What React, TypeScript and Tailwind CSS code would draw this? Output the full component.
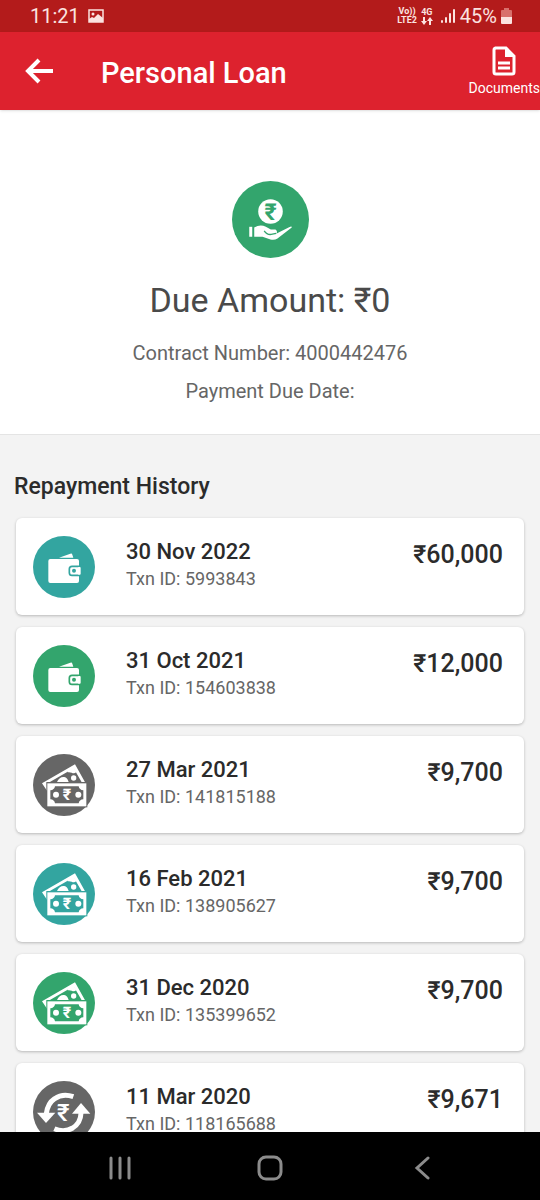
import type { ReactNode } from "react";
import clsx from "clsx";

type IconKind = "wallet" | "notes" | "refund";
type Tone = "teal" | "green" | "gray";

type Repayment = {
  date: string;
  txnId: string;
  amount: string;
  icon: IconKind;
  tone: Tone;
};

const repayments: Repayment[] = [
  { date: "30 Nov 2022", txnId: "5993843", amount: "₹60,000", icon: "wallet", tone: "teal" },
  { date: "31 Oct 2021", txnId: "154603838", amount: "₹12,000", icon: "wallet", tone: "green" },
  { date: "27 Mar 2021", txnId: "141815188", amount: "₹9,700", icon: "notes", tone: "gray" },
  { date: "16 Feb 2021", txnId: "138905627", amount: "₹9,700", icon: "notes", tone: "teal" },
  { date: "31 Dec 2020", txnId: "135399652", amount: "₹9,700", icon: "notes", tone: "green" },
  { date: "11 Mar 2020", txnId: "118165688", amount: "₹9,671", icon: "refund", tone: "gray" },
];

// currentColor is the disc, everything on top of it is white
const Disc = ({ tone, children }: { tone: Tone; children: ReactNode }) => (
  <svg
    viewBox="0 0 186 186"
    aria-hidden="true"
    className={clsx(
      "size-[62px] shrink-0",
      tone === "teal" && "text-[#33a5a0]",
      tone === "green" && "text-[#33a56d]",
      tone === "gray" && "text-[#666666]"
    )}
  >
    <circle cx="93" cy="93" r="93" fill="currentColor" />
    {children}
  </svg>
);

const WalletArt = () => (
  <>
    <path d="M78 65 L112 53 Q117 51 118 56 L121 65 Z" fill="#fff" />
    <rect x="46" y="69" width="92" height="72" rx="6" fill="#fff" />
    <path d="M146 91 H117 Q109 91 109 99 V110 Q109 118 117 118 H146 Z" fill="#fff" stroke="currentColor" strokeWidth="5" />
    <path d="M139 86 H152 V123 H139 Z" fill="currentColor" />
    <path d="M136 93 H140 Q143 93 143 96 V113 Q143 116 140 116 H136 Z" fill="#fff" />
    <circle cx="123" cy="104" r="6" fill="currentColor" />
  </>
);

const NotesArt = () => (
  <>
    <path d="M27 88 L126 31 L157 86 H147 L122 43 L39 91 L43 98 V112 Z" fill="#fff" />
    <path d="M72 84 Q80 67 94 69 Q103 71 107 84 Z" fill="#fff" />
    <path d="M104 49 L122 40 L130 54 Q124 60 116 56 Q110 54 104 55 Z" fill="#fff" />
    <circle cx="122" cy="72" r="8" fill="#fff" />
    <path d="M37 92 L53 83 Q60 90 53 98 H43 Z" fill="#fff" />
    <rect x="40" y="84" width="123" height="76" fill="currentColor" />
    <rect x="43" y="88" width="117" height="69" fill="#fff" />
    <path
      d="M66 97 H137 Q139 108 151 109 V136 Q139 137 137 148 H66 Q64 137 52 136 V109 Q64 108 66 97 Z"
      fill="currentColor"
    />
    <circle cx="69" cy="122" r="9" fill="#fff" />
    <circle cx="136" cy="122" r="9" fill="#fff" />
    <text x="102" y="139" textAnchor="middle" fontSize="48" fontWeight="700" fill="#fff">
      ₹
    </text>
  </>
);

const RefundArt = () => (
  <>
    <path d="M121 47 Q89 36 65 53 Q44 67 40 98" fill="none" stroke="#fff" strokeWidth="15" />
    <path d="M12 95 H67 L39 126 Z" fill="#fff" />
    <path d="M64 143 Q93 156 119 141 Q143 126 144 96" fill="none" stroke="#fff" strokeWidth="15" />
    <path d="M117 98 H172 L144 66 Z" fill="#fff" />
    <text x="91" y="121" textAnchor="middle" fontSize="72" fontWeight="500" fill="#fff">
      ₹
    </text>
  </>
);

const art: Record<IconKind, ReactNode> = {
  wallet: <WalletArt />,
  notes: <NotesArt />,
  refund: <RefundArt />,
};

const LoanIcon = () => (
  <svg viewBox="0 0 232 232" aria-hidden="true" className="size-[77px]">
    <circle cx="116" cy="116" r="116" fill="#33a56d" />
    <circle cx="116" cy="92" r="37" fill="#fff" />
    <text x="116" y="117" textAnchor="middle" fontSize="70" fontWeight="700" fill="#33a56d">
      ₹
    </text>
    <rect x="52" y="138" width="9" height="30" fill="#fff" />
    <path
      d="M67 140 Q85 130 102 138 L117 146 H131 Q139 152 133 159 L172 139 Q181 134 180 140 L137 173 Q128 179 116 176 L92 168 H67 Z"
      fill="#fff"
    />
    <path d="M97 150 Q106 163 118 161 L133 158" fill="none" stroke="#33a56d" strokeWidth="4" />
  </svg>
);

const StatusBar = () => (
  <div className="flex h-8 shrink-0 items-center justify-between bg-[#b31b1b] pr-7 pl-[30px] text-[#fbe3e0]">
    <div className="flex items-center gap-2">
      <span className="text-xl">11:21</span>
      <svg viewBox="0 0 16 14" aria-hidden="true" className="h-[14px] w-4">
        <rect x="1" y="1" width="14" height="12" fill="none" stroke="currentColor" strokeWidth="1.5" />
        <circle cx="5" cy="5" r="1.5" fill="currentColor" />
        <path d="M1 12 V10 L4 8 L6 9 L10 5 L15 9 V13 H1 Z" fill="currentColor" />
      </svg>
    </div>
    <div className="flex items-center gap-1">
      <span className="text-center text-[9px] leading-[9px] font-bold">
        Vo))
        <br />
        LTE2
      </span>
      <span className="flex flex-col items-center text-[9px] leading-[9px] font-bold">
        4G
        <svg viewBox="0 0 12 8" aria-hidden="true" className="h-2 w-3" fill="currentColor">
          <path d="M2 0 H4 V4 H6 L3 8 L0 4 H2 Z" />
          <path d="M8 8 H10 V4 H12 L9 0 L6 4 H8 Z" />
        </svg>
      </span>
      <svg viewBox="0 0 15 14" aria-hidden="true" className="ml-1 h-[14px] w-[15px]" fill="currentColor">
        <rect x="0" y="11" width="2" height="3" rx="1" />
        <rect x="4" y="8" width="2" height="6" rx="1" />
        <rect x="8" y="4" width="2" height="10" rx="1" />
        <rect x="12" y="0" width="2" height="14" rx="1" />
      </svg>
      <span className="text-xl">45%</span>
      <svg viewBox="0 0 11 16" aria-hidden="true" className="h-4 w-[11px]">
        <path d="M3 0 H8 V2 H10 Q11 2 11 3 V9 H0 V3 Q0 2 1 2 H3 Z" fill="#d8706c" />
        <path d="M0 9 H11 V15 Q11 16 10 16 H1 Q0 16 0 15 Z" fill="currentColor" />
      </svg>
    </div>
  </div>
);

const Header = () => (
  <header className="z-10 flex h-[78px] shrink-0 items-center bg-[#dd222e] pl-[25px] text-white shadow-sm">
    <button type="button" aria-label="Back" className="shrink-0">
      <svg viewBox="0 0 28 26" className="h-[26px] w-7" fill="none" stroke="currentColor" strokeWidth="4">
        <path d="M14 2 L3 13 L14 24 M3 13 H28" />
      </svg>
    </button>
    <h1 className="ml-12 flex-1 pt-1 text-[29px] leading-9 font-medium">Personal Loan</h1>
    <button type="button" className="flex shrink-0 flex-col items-center gap-0.5 pt-0.5 text-sm">
      <svg viewBox="0 0 24 30" aria-hidden="true" className="h-[30px] w-6">
        <path
          d="M3 2 H14 L22 10 V26 Q22 28 20 28 H4 Q2 28 2 26 V4 Q2 2 4 2"
          fill="none"
          stroke="currentColor"
          strokeWidth="3"
        />
        <path d="M13 2 L22 11 H13 Z" fill="currentColor" />
        <path d="M6 17 H18 M6 22 H18" stroke="currentColor" strokeWidth="3" />
      </svg>
      Documents
    </button>
  </header>
);

const Summary = () => (
  <section className="flex shrink-0 flex-col items-center border-b border-[#e4e4e4] bg-white pt-[71px] pb-7 text-[#666666]">
    <LoanIcon />
    <h2 className="mt-5 text-[34px] leading-[44px] text-[#4a4a4a]">Due Amount: ₹0</h2>
    <p className="mt-4 text-xl leading-[30px]">Contract Number: 4000442476</p>
    <p className="mt-2 text-xl leading-[30px]">Payment Due Date:</p>
  </section>
);

const RepaymentCard = ({ item }: { item: Repayment }) => (
  <li className="flex h-[97px] shrink-0 items-center rounded-md bg-white pr-[21px] pl-[17px] shadow-[0_1px_3px_rgba(0,0,0,0.25)]">
    <Disc tone={item.tone}>{art[item.icon]}</Disc>
    <div className="ml-[31px] flex-1 pb-[3px]">
      <p className="text-[22px] leading-7 font-medium text-[#2b2b2b]">{item.date}</p>
      <p className="text-lg leading-[26px] text-[#666666]">Txn ID: {item.txnId}</p>
    </div>
    <p className="self-start pt-[21px] text-[25px] leading-8 font-medium text-[#2b2b2b]">{item.amount}</p>
  </li>
);

const NavBar = () => (
  <nav className="z-10 flex h-[68px] shrink-0 items-center justify-between bg-black px-[20%] pt-1 text-[#8c8c8c]">
    <button type="button" aria-label="Recent apps">
      <svg viewBox="0 0 24 24" className="size-6" fill="none" stroke="currentColor" strokeWidth="3" strokeLinecap="round">
        <path d="M3 2 V22 M12 2 V22 M21 2 V22" />
      </svg>
    </button>
    <button type="button" aria-label="Home">
      <svg viewBox="0 0 26 26" className="size-[26px]" fill="none" stroke="currentColor" strokeWidth="3">
        <rect x="2" y="2" width="22" height="22" rx="7" />
      </svg>
    </button>
    <button type="button" aria-label="Back">
      <svg viewBox="0 0 24 24" className="size-6" fill="none" stroke="currentColor" strokeWidth="3" strokeLinecap="round">
        <path d="M20 2 L9 12 L20 22" />
      </svg>
    </button>
  </nav>
);

export default function App() {
  return (
    <div className="flex h-screen flex-col overflow-hidden bg-[#f3f3f3] font-['Roboto','Noto_Sans',sans-serif]">
      <StatusBar />
      <Header />
      <main className="flex min-h-0 flex-1 flex-col overflow-hidden">
        <Summary />
        <section className="px-4 pt-9">
          <h2 className="-ml-0.5 text-[23px] leading-8 font-medium text-[#2b2b2b]">Repayment History</h2>
          <ul className="mt-[15px] flex flex-col gap-3">
            {repayments.map((item) => (
              <RepaymentCard key={item.txnId} item={item} />
            ))}
          </ul>
        </section>
      </main>
      <NavBar />
    </div>
  );
}
